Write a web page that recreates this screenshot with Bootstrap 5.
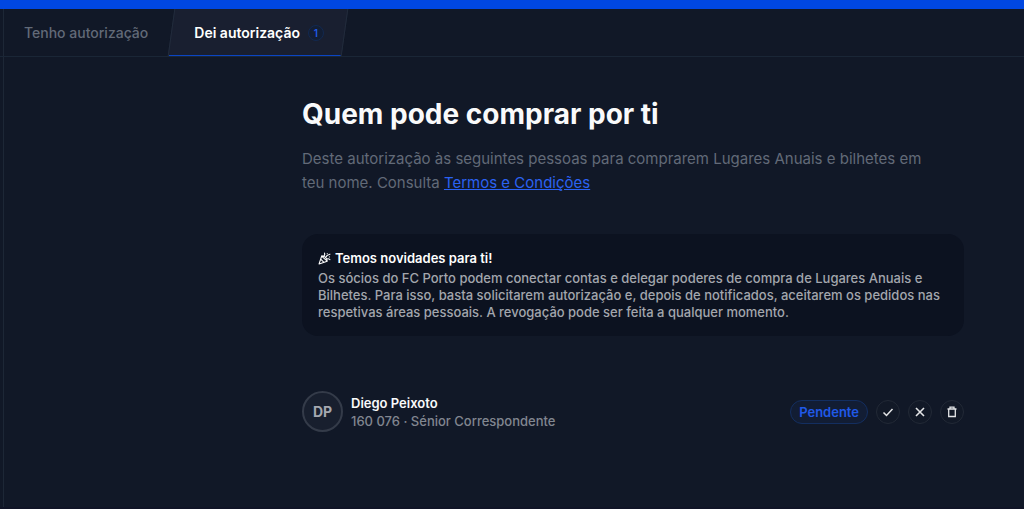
<!DOCTYPE html>
<html lang="pt">
<head>
<meta charset="utf-8">
<meta name="viewport" content="width=device-width, initial-scale=1">
<title>Quem pode comprar por ti</title>
<link href="https://cdn.jsdelivr.net/npm/bootstrap@5.3.0/dist/css/bootstrap.min.css" rel="stylesheet">
<style>
body{background:#111827;color:#f9fafb;font-family:Inter,"Liberation Sans",sans-serif;font-size:13px;line-height:18px}
.shell{border-top:9px solid #0047e1;border-bottom:2px solid #101426}
.panel{margin-left:3px;border-left:1px solid #1d2736}
.tabs{height:48px;border-bottom:1px solid #1a2636;margin-left:-4px;padding-left:4px}
.tab{border:0;background:none;padding:0 20px;height:47px;font-size:14px;line-height:20px;font-weight:500;color:#626a78}
.tab.current{position:relative;isolation:isolate;color:#fff;padding:0 24px 0 26px;font-weight:600}
.tab.current::before{content:"";position:absolute;inset:0 3px;z-index:-1;background:#191f30;border:solid #222c3c;border-width:0 1px;box-shadow:inset 0 -1px #0b45c4;transform:skewX(-8deg)}
.count{width:16px;height:16px;border:1px solid #122950;border-radius:50%;font-size:10px;line-height:14px;color:#2059e8;background:#131e34}
.main{width:100%;max-width:662px;margin-right:60px;padding-top:38px}
h1{font-size:28px;line-height:38px;font-weight:700;margin:0 0 14px}
.intro{font-size:15px;line-height:24px;color:#626a78;margin:0 0 39px;padding-right:20px}
.intro a{color:#2b62f2}
.notice{background:#0c1220;border-radius:16px;padding:15px 16px;font-weight:500;color:#a3a6ad}
.notice h2{font-size:13px;line-height:18px;font-weight:600;color:#fff;margin:0 0 3px}
.notice p{line-height:17px;margin:0}
.person{margin-top:55px}
.avatar{width:41px;height:41px;border:2px solid #343b49;border-radius:50%;background:#181f2e;color:#a5a8af;font-size:14px;font-weight:700}
.sub{color:#818690;font-weight:500}
.state{height:24px;border:1px solid #132e60;border-radius:12px;background:#121d34;color:#2059e8;padding:0 8px;font-weight:600}
.round{width:24px;height:24px;padding:0;border:1px solid #222936;border-radius:50%;background:#121927;color:#e4e5e7}
</style>
</head>
<body>
<div class="shell d-flex flex-column min-vh-100"><div class="panel flex-grow-1">
<nav class="tabs d-flex" aria-label="Autorizações">
<button class="tab" type="button">Tenho autorização</button>
<button class="tab current d-flex align-items-center gap-2" type="button">Dei autorização <span class="count">1</span></button>
</nav>
<main class="main ms-auto">
<h1>Quem pode comprar por ti</h1>
<p class="intro">Deste autorização às seguintes pessoas para comprarem Lugares Anuais e bilhetes em teu nome. Consulta <a href="#">Termos e Condições</a></p>
<section class="notice">
<h2 class="d-flex align-items-center gap-1"><svg width="13" height="13" viewBox="0 0 24 24" fill="none" stroke="currentColor" stroke-width="2" stroke-linecap="round" stroke-linejoin="round" aria-hidden="true"><path d="M7 7 2 22l15-5C17 12 12 7 7 7ZM5 13l6 6M7 8l9 8M10 8c2-1 3-3 2-6M14 10c2-4 4-5 8-6M16 13c2-1 4-1 6 1M17 3v.1M21 9v.1"/></svg> Temos novidades para ti!</h2>
<p>Os sócios do FC Porto podem conectar contas e delegar poderes de compra de Lugares Anuais e Bilhetes. Para isso, basta solicitarem autorização e, depois de notificados, aceitarem os pedidos nas respetivas áreas pessoais. A revogação pode ser feita a qualquer momento.</p>
</section>
<div class="person d-flex align-items-center">
<span class="avatar d-flex align-items-center justify-content-center flex-shrink-0">DP</span>
<div class="ms-2"><div class="fw-semibold">Diego Peixoto</div><div class="sub">160 076 · Sénior Correspondente</div></div>
<div class="d-flex align-items-center gap-2 ms-auto">
<span class="state d-flex align-items-center">Pendente</span>
<button class="round d-flex align-items-center justify-content-center" type="button" aria-label="Aceitar"><svg width="12" height="12" viewBox="0 0 12 12" fill="none" stroke="currentColor" stroke-width="1.5"><path d="m1.5 6.5 3 3 6-6.5"/></svg></button>
<button class="round d-flex align-items-center justify-content-center" type="button" aria-label="Recusar"><svg width="12" height="12" viewBox="0 0 12 12" fill="none" stroke="currentColor" stroke-width="1.6"><path d="m2 2 8 8M10 2l-8 8"/></svg></button>
<button class="round d-flex align-items-center justify-content-center" type="button" aria-label="Eliminar"><svg width="12" height="12" viewBox="0 0 12 12" fill="none" stroke="currentColor" stroke-width="1.3"><path d="M1.5 3h9M4 3V1.2h4V3M2.7 3v7.5h6.6V3"/></svg></button>
</div></div>
</main>
</div></div>
<script src="https://cdn.jsdelivr.net/npm/bootstrap@5.3.0/dist/js/bootstrap.bundle.min.js"></script>
</body>
</html>
